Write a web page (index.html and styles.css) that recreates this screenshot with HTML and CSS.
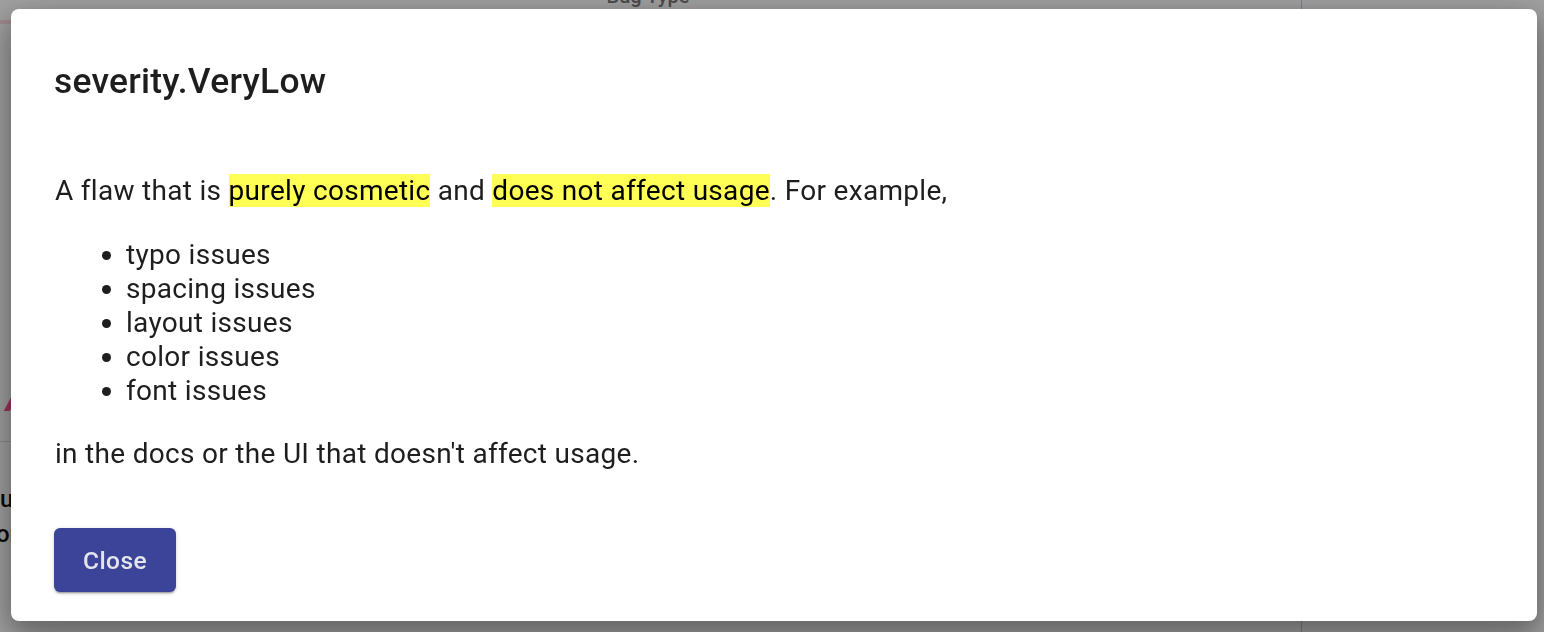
FILE: index.html
```html
<!DOCTYPE html>
<html lang="en">
<head>
<meta charset="utf-8">
<title>severity.VeryLow</title>
<link rel="stylesheet" href="styles.css">
</head>
<body>
<div class="page">
  <main class="main">
    <div class="topbar"><span class="field-label">Bug Type</span></div>
    <div class="pink-line"></div>
    <div class="pink-mark"></div>
    <hr class="rule">
    <p class="bg-text bg-first">u</p>
    <p class="bg-text bg-second">or</p>
  </main>
  <aside class="side"></aside>
</div>
<div class="backdrop"></div>
<div class="dialog" role="dialog" aria-labelledby="dlg-title">
  <h2 class="dialog-title" id="dlg-title">severity.VeryLow</h2>
  <div class="dialog-content">
    <p class="para">A flaw that is <span class="hl">purely cosmetic</span> and <span class="hl">does not affect usage</span>. For example,</p>
    <ul class="issue-list">
      <li>typo issues</li>
      <li>spacing issues</li>
      <li>layout issues</li>
      <li>color issues</li>
      <li>font issues</li>
    </ul>
    <p class="para">in the docs or the UI that doesn't affect usage.</p>
  </div>
  <div class="dialog-actions">
    <button class="btn-close" type="button">Close</button>
  </div>
</div>
</body>
</html>
```

FILE: styles.css
```css
* { box-sizing: border-box; }

html, body {
  margin: 0;
  padding: 0;
  height: 100%;
  background: #ffffff;
  font-family: Roboto, "Noto Sans", "Liberation Sans", sans-serif;
  overflow: hidden;
}

/* ---------- underlying page ---------- */
.page {
  display: grid;
  grid-template-columns: 1301px 1fr;
  height: 632px;
  overflow: hidden;
}

.main {
  display: flex;
  flex-direction: column;
  align-items: flex-start;
}

.topbar {
  align-self: stretch;
  height: 20px;
  display: flex;
  justify-content: center;
  align-items: flex-end;
  margin-top: -14px;
}

.field-label {
  font-size: 20px;
  font-weight: 500;
  color: #7a7a7a;
  line-height: 20px;
  margin-left: -5px;
}

.pink-line {
  margin-top: 14px;
  height: 4px;
  width: 40px;
  background: #ffdde2;
}

.pink-mark {
  margin-top: 371px;
  margin-left: 8px;
  width: 6px;
  height: 16px;
  background: #ff4f95;
  transform: skewX(-28deg);
}

.rule {
  align-self: stretch;
  margin: 30px 0 0;
  border: 0;
  border-top: 1px solid #dcdcdc;
}

.bg-text {
  margin: 0;
  font-size: 24px;
  line-height: 35px;
  font-weight: 500;
  color: #111;
}
.bg-first { margin-top: 40px; margin-left: 0; }
.bg-second { margin-left: -4px; }

.side {
  border-left: 1px solid #c2c9d6;
}

/* ---------- overlay ---------- */
.backdrop {
  position: fixed;
  inset: 0;
  background: rgba(0, 0, 0, 0.37);
}

.dialog {
  position: fixed;
  top: 9px;
  left: 11px;
  right: 7px;
  bottom: 11px;
  background: #ffffff;
  border-radius: 8px;
  box-shadow: 0 16px 36px 3px rgba(0,0,0,0.14),
              0 11px 24px 2px rgba(0,0,0,0.2),
              0 9px 46px 8px rgba(0,0,0,0.12);
  display: flex;
  flex-direction: column;
  color: #212121;
}

.dialog-title {
  margin: 0;
  padding: 44px 43px 0;
  font-size: 35.4px;
  line-height: 56px;
  font-weight: 500;
  letter-spacing: 0.26px;
  color: #1e1e1e;
}

.dialog-content {
  padding: 65px 44px 0;
  font-size: 28px;
  line-height: 34px;
  letter-spacing: 0.3px;
  color: #1e1e1e;
}

.para {
  margin: 0;
}

.hl {
  background: #ffff55;
  color: #000;
}

.issue-list {
  margin: 30px 0 29px;
  padding-left: 71px;
}

.dialog-actions {
  padding: 57px 43px 0;
  display: flex;
}

.btn-close {
  width: 122px;
  height: 64px;
  border: 0;
  border-radius: 6px;
  background: #3c4499;
  color: #e4e4ec;
  font-family: Roboto, "Noto Sans", sans-serif;
  font-size: 24.5px;
  font-weight: 500;
  letter-spacing: 0.4px;
  box-shadow: 0 3px 1px -2px rgba(0,0,0,0.2),
              0 2px 2px 0 rgba(0,0,0,0.14),
              0 1px 5px 0 rgba(0,0,0,0.12);
  cursor: pointer;
}
```
